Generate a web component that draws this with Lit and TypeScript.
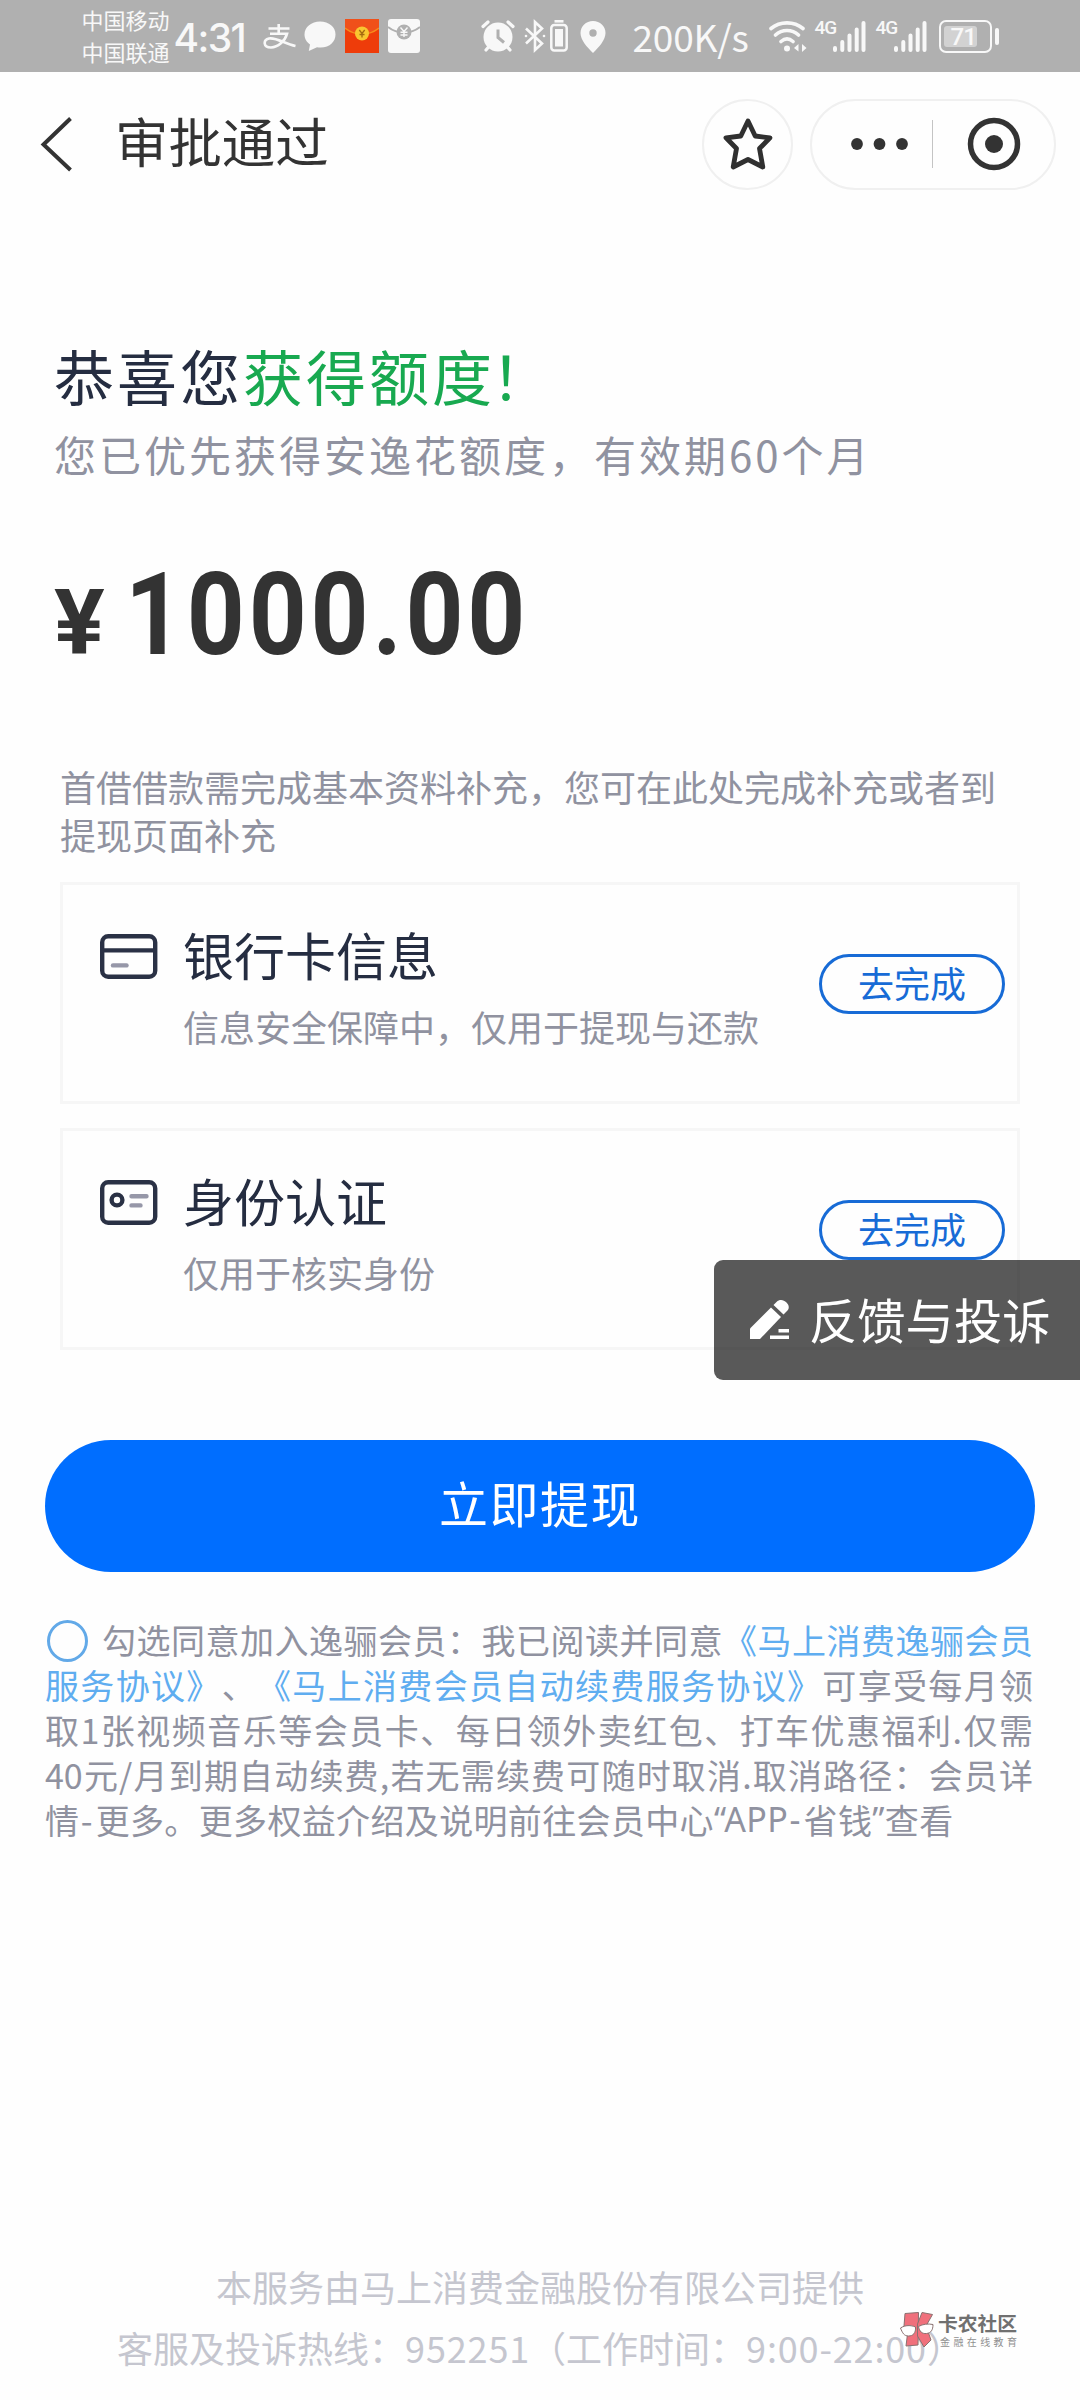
import { LitElement, html, css, svg } from "lit";
import { customElement, property } from "lit/decorators.js";

const FONT = css`"Noto Sans CJK SC", "Noto Sans", sans-serif`;

const bankCardIcon = svg`
  <rect x="2.2" y="2.2" width="53" height="40.6" rx="6" fill="none" stroke="#2a3145" stroke-width="4.4"/>
  <path d="M2 16.4H55" stroke="#2a3145" stroke-width="4.4"/>
  <path d="M13 31.4H26.5" stroke="#9697a8" stroke-width="4.4" stroke-linecap="round"/>`;

const idCardIcon = svg`
  <rect x="2.2" y="2.2" width="53" height="40.6" rx="6" fill="none" stroke="#2a3145" stroke-width="4.4"/>
  <circle cx="17" cy="20" r="5.4" fill="none" stroke="#2a3145" stroke-width="4.4"/>
  <path d="M31.5 16.2H46.5M31.5 25.4H40.5" stroke="#9697a8" stroke-width="4.4" stroke-linecap="round"/>`;

@customElement("status-bar")
class StatusBar extends LitElement {
  static styles = css`
    :host {
      display: flex;
      height: 72px;
      background: #b0b0b0;
      color: #f8f8f8;
      font-family: ${FONT};
      align-items: flex-start;
      white-space: nowrap;
    }
    svg { display: block; flex: none; }
    .carriers { margin: 3px 0 0 81.5px; width: 88px; font-size: 22px; line-height: 32px; }
    .time { margin: 15px 0 0 4px; width: 75px; font: 500 39px/46px Inter, Roboto, sans-serif; letter-spacing: -1.6px; }
    .icon { margin-top: 18px; }
    .alipay { margin-left: 14px; }
    .chat { margin-left: 8px; }
    .packet { margin-left: 8px; }
    .mail { margin-left: 8px; }
    .alarm { margin-left: 60px; }
    .bt { margin-left: 9px; }
    .device { margin-left: 4px; }
    .pin { margin-left: 12px; }
    .rate { margin: 13px 0 0 27px; width: 114px; font-size: 37px; line-height: 46px; font-weight: 400; letter-spacing: -0.2px; }
    .wifi { margin-left: 22px; }
    .net { margin: 18px 0 0 8px; font: 500 19px/20px Roboto, sans-serif; width: 18px; letter-spacing: -1px; }
    .net.second { margin-left: 10px; }
    .battery {
      margin: 20px 0 0 12px;
      box-sizing: border-box;
      width: 53px; height: 33px;
      border: 2.5px solid #f8f8f8;
      border-radius: 7px;
      padding: 4px 3px;
      display: flex;
    }
    .level {
      width: 33px;
      background: #d2d2d2;
      border-radius: 3px;
      display: flex;
      align-items: center;
      padding-left: 7px;
      box-sizing: border-box;
      font: 500 24px/20px Roboto, sans-serif;
      letter-spacing: -1px;
    }
    .nub { margin: 28px 0 0 3px; width: 4px; height: 17px; border-radius: 2px; background: #f8f8f8; }
  `;

  private bars() {
    return svg`<path d="M2 30V32M9.3 24V32M16.5 17.5V32M23.7 11.5V32M30.5 5V32" stroke="#f8f8f8" stroke-width="4" stroke-linecap="round"/>`;
  }

  render() {
    return html`
      <div class="carriers"><div>中国移动</div><div>中国联通</div></div>
      <div class="time">4:31</div>
      <svg class="icon alipay" width="33" height="36" viewBox="0 0 33 36" fill="none" stroke="#f8f8f8" stroke-width="2.6">
        <path d="M5.5 10.5H26.5M15.7 6V15.5M7 15.8H24C22 23 15 29.5 8 29.5C0 29.5 0 22 6 20.5C13 19 22 26 32.5 28"/>
      </svg>
      <svg class="icon chat" width="33" height="36" viewBox="0 0 33 36">
        <path fill="#f8f8f8" d="M16 3.5C7.500 3.500 .5 9 .5 16.500C.5 21 2.800 24 6 26.500L4.800 33L13 29.300C25 31 31.500 24 31.500 16.500C31.500 9 25 3.500 16 3.500Z"/>
      </svg>
      <svg class="icon packet" width="34" height="36" viewBox="0 0 34 36">
        <rect y="1" width="34" height="34" fill="#ee3c0a"/>
        <path d="M0 1H34V10C29 14 23 16 17 16S5 14 0 10Z" fill="#f0501a"/>
        <path d="M0 10C5 14 11 16 17 16S29 14 34 10" fill="none" stroke="#f78a1d" stroke-width="1.500"/>
        <circle cx="17" cy="15.500" r="7" fill="#f9c630"/>
        <path d="M14.300 12L17 15.500L19.700 12M17 15.500V19.500M14.500 16.500H19.500" fill="none" stroke="#a46a10" stroke-width="1.300"/>
      </svg>
      <svg class="icon mail" width="34" height="36" viewBox="0 0 34 36">
        <rect x="1" y="1" width="32" height="34" rx="3" fill="#f8f8f8"/>
        <path d="M1 9C6 13 11 14.500 17 14.500S28 13 33 9" fill="none" stroke="#b0b0b0" stroke-width="2"/>
        <circle cx="17" cy="14" r="7.500" fill="#b0b0b0"/>
        <path d="M13.500 9.500L17 13.500L20.500 9.500M17 13.500V19M13.500 14.300H20.500M13.500 17H20.500" fill="none" stroke="#f8f8f8" stroke-width="1.400"/>
      </svg>
      <svg class="icon alarm" width="34" height="36" viewBox="0 0 34 36">
        <circle cx="17" cy="19" r="14.500" fill="#f8f8f8"/>
        <path d="M2 8.500L7 4M32 8.500L27 4M5 32L8 28.500M29 32L26 28.500" stroke="#f8f8f8" stroke-width="3.200" stroke-linecap="round"/>
        <path d="M17 11.500V19.500L23 24.500" stroke="#b0b0b0" stroke-width="3" fill="none"/>
      </svg>
      <svg class="icon bt" width="22" height="36" viewBox="0 0 22 36" fill="none" stroke="#f8f8f8" stroke-width="2.600">
        <path d="M2 10.500L18 25.500L11 32V4L18 10.500L2 25.500"/>
        <circle cx="2" cy="18" r="1.300" fill="#f8f8f8" stroke="none"/>
        <circle cx="20" cy="18" r="1.300" fill="#f8f8f8" stroke="none"/>
      </svg>
      <svg class="icon device" width="18" height="36" viewBox="0 0 18 36">
        <path d="M4.500 3.300H13.500" stroke="#f8f8f8" stroke-width="2.600"/>
        <rect x="1.300" y="7" width="15.400" height="25.500" rx="3" fill="none" stroke="#f8f8f8" stroke-width="2.500"/>
        <rect x="5" y="11" width="8" height="17.500" fill="#f8f8f8"/>
      </svg>
      <svg class="icon pin" width="26" height="36" viewBox="0 0 26 36">
        <path fill="#f8f8f8" fill-rule="evenodd" d="M13 3C6 3 .5 8 .5 15C.5 22 7 29 13 35C19 29 25.500 22 25.500 15C25.500 8 20 3 13 3ZM13 11.300A3.700 3.700 0 1 1 13 18.700A3.700 3.700 0 1 1 13 11.300Z"/>
      </svg>
      <div class="rate">200K/s</div>
      <svg class="icon wifi" width="38" height="36" viewBox="0 0 38 36" fill="none" stroke="#f8f8f8" stroke-width="3.600" stroke-linecap="round">
        <path d="M2 10.500C11 3 25 3 34 10.500M6.500 17C13 11 23 11 29.500 17M12 23.500C16 20 20 20 24 23.500"/>
        <circle cx="18" cy="30.500" r="3" fill="#f8f8f8" stroke="none"/>
        <path d="M29.500 26V33.500L25 30M33 34V26L37.500 30" stroke-width="0" fill="#f8f8f8"/>
      </svg>
      <div class="net">4G</div>
      <svg class="icon" width="33" height="36" viewBox="0 0 33 36">${this.bars()}</svg>
      <div class="net second">4G</div>
      <svg class="icon" width="33" height="36" viewBox="0 0 33 36">${this.bars()}</svg>
      <div class="battery"><div class="level">71</div></div>
      <div class="nub"></div>
    `;
  }
}

@customElement("nav-bar")
class NavBar extends LitElement {
  static styles = css`
    :host {
      display: flex;
      align-items: center;
      height: 144px;
      padding: 0 24px 0 39px;
      font-family: ${FONT};
      color: #333;
    }
    svg { display: block; flex: none; }
    .title { margin-left: 40px; font-size: 53.4px; line-height: 64px; padding-bottom: 8px; flex: 1; white-space: nowrap; }
    .star, .capsule { box-sizing: border-box; height: 91px; border: 2px solid #f0f0f0; border-radius: 46px; display: flex; align-items: center; }
    .star { width: 91px; justify-content: center; margin-right: 17px; }
    .capsule { width: 246px; }
    .dots { margin-left: 38px; }
    .divider { width: 1px; height: 48px; background: #c4c4c4; margin-left: 22px; }
    .target { margin-left: 34px; }
  `;

  render() {
    return html`
      <svg width="36" height="56" viewBox="0 0 36 56" fill="none" stroke="#333" stroke-width="4"><path d="M31.500 2.500L4.500 28.500L31.500 54"/></svg>
      <div class="title">审批通过</div>
      <div class="star">
        <svg width="52" height="54" viewBox="0 0 52 54" fill="none" stroke="#303030" stroke-width="4.800" stroke-linejoin="round">
          <path d="M26 4L33.200 19L48 20.800L37.500 31.500L40.800 50L26 42.500L11.200 50L14.500 31.500L4 20.800L18.800 19Z"/>
        </svg>
      </div>
      <div class="capsule">
        <svg class="dots" width="60" height="14" viewBox="0 0 60 14" fill="#333"><circle cx="7" cy="7" r="5.900"/><circle cx="29.500" cy="7" r="5.900"/><circle cx="52" cy="7" r="5.900"/></svg>
        <div class="divider"></div>
        <svg class="target" width="54" height="54" viewBox="0 0 54 54"><circle cx="27" cy="27" r="23.500" fill="none" stroke="#333" stroke-width="5.500"/><circle cx="27" cy="27" r="9" fill="#333"/></svg>
      </div>
    `;
  }
}

@customElement("task-card")
class TaskCard extends LitElement {
  @property() heading = "";
  @property() detail = "";
  @property({ attribute: false }) icon: unknown;

  static styles = css`
    :host {
      box-sizing: border-box;
      display: flex;
      align-items: flex-start;
      height: 222px;
      border: 3px solid #f6f6f6;
      padding: 39px 12px 0 37px;
      font-family: ${FONT};
      text-spacing-trim: space-all;
      white-space: nowrap;
    }
    .icon { display: block; margin: 10px 25px 0 0; }
    .text { flex: 1; }
    .heading { font-size: 51px; line-height: 60px; color: #252d41; }
    .detail { margin-top: 18px; font-size: 36px; line-height: 48px; color: #9092a0; }
    .action {
      box-sizing: border-box;
      width: 186px; height: 60px;
      margin-top: 30px;
      border: 3px solid #176bd6;
      border-radius: 30px;
      color: #176bd6;
      font-size: 36px;
      line-height: 50px;
      text-align: center;
    }
  `;

  render() {
    return html`
      <svg class="icon" width="58" height="45" viewBox="0 0 58 45">${this.icon}</svg>
      <div class="text">
        <div class="heading">${this.heading}</div>
        <div class="detail">${this.detail}</div>
      </div>
      <div class="action">去完成</div>
    `;
  }
}

@customElement("app-root")
class AppRoot extends LitElement {
  static styles = css`
    :host {
      display: flex;
      flex-direction: column;
      position: relative;
      box-sizing: border-box;
      width: 1080px;
      height: 2400px;
      overflow: hidden;
      background: #fefefe;
      font-family: ${FONT};
      text-spacing-trim: space-all;
    }
    .hero { padding: 123px 54px 0; white-space: nowrap; }
    .congrats { font-size: 60px; line-height: 72px; letter-spacing: 3px; color: #252d41; }
    .granted { color: #18a950; }
    .bang { margin-left: -4px; }
    .validity { margin-top: 16px; font-size: 42px; line-height: 54px; letter-spacing: 3px; color: #9092a0; }
    .amount { margin-top: 84px; display: flex; align-items: baseline; height: 100px; font: 700 115px/100px Roboto, sans-serif; color: #333; }
    .yen { font-size: 91px; transform: scaleX(1.04); transform-origin: 0 50%; width: 71px; }
    .digits { transform: scaleX(0.88); transform-origin: 0 50%; letter-spacing: 4.300px; }
    .tasks { display: flex; flex-direction: column; gap: 24px; padding: 97px 60px 0; }
    .note { font-size: 36px; line-height: 48px; color: #9092a0; }
    .submit { margin: 90px 45px 0; height: 132px; border-radius: 66px; background: #006eff; color: #fff; font-size: 49px; line-height: 124px; letter-spacing: 1.500px; text-align: center; }
    .agreement { margin: 45px 47px 0 45px; font-size: 34px; line-height: 45px; color: #9092a0; }
    .line { display: flex; white-space: nowrap; }
    .line.last { letter-spacing: 0.350px; }
    .dash { letter-spacing: 3px; padding-left: 1.500px; }
    .fill { flex: 1; text-align: justify; text-align-last: justify; }
    .check { flex: none; margin: 3px 14px 0 2px; width: 41px; height: 42px; box-sizing: border-box; border: 3px solid #62a9e8; border-radius: 50%; }
    .link { color: #5fadf0; }
    .latin { font-family: "Noto Sans", sans-serif; }
    .footer { margin-top: auto; padding-bottom: 22px; text-align: center; font-size: 36px; line-height: 61px; color: #c5c6cf; white-space: nowrap; }
    .num { letter-spacing: 0.850px; }
    .feedback {
      position: absolute; right: 0; top: 1260px;
      box-sizing: border-box; width: 366px; height: 120px;
      padding-left: 35px;
      display: flex; align-items: center;
      border-radius: 9px 0 0 9px;
      background: rgba(0, 0, 0, 0.65);
      color: #fff; font-size: 48.300px; line-height: 60px; white-space: nowrap;
    }
    .feedback svg { display: block; margin-right: 20px; }
    .feedback span { padding-bottom: 4px; }
    .watermark { position: absolute; left: 899px; top: 2311px; display: flex; gap: 4px; white-space: nowrap; color: #707070; }
    .brand { font-size: 19.800px; font-weight: 700; line-height: 22px; margin-top: 1px; }
    .slogan { font-size: 10px; line-height: 13px; letter-spacing: 3.400px; margin: 1px 0 0 2px; color: #909090; }
  `;

  render() {
    return html`
      <status-bar></status-bar>
      <nav-bar></nav-bar>
      <section class="hero">
        <div class="congrats">恭喜您<span class="granted">获得额度<span class="bang">！</span></span></div>
        <div class="validity">您已优先获得安逸花额度，有效期60个月</div>
        <div class="amount"><span class="yen">¥</span><span class="digits">1000.00</span></div>
      </section>
      <section class="tasks">
        <div class="note">首借借款需完成基本资料补充，您可在此处完成补充或者到提现页面补充</div>
        <task-card heading="银行卡信息" detail="信息安全保障中，仅用于提现与还款" .icon=${bankCardIcon}></task-card>
        <task-card heading="身份认证" detail="仅用于核实身份" .icon=${idCardIcon}></task-card>
      </section>
      <div class="submit">立即提现</div>
      <section class="agreement">
        <div class="line"><span class="check"></span><div class="fill">勾选同意加入逸骊会员：我已阅读并同意<span class="link">《马上消费逸骊会员</span></div></div>
        <div class="line"><div class="fill"><span class="link">服务协议》</span>、<span class="link">《马上消费会员自动续费服务协议》</span>可享受每月领</div></div>
        <div class="line"><div class="fill">取1张视频音乐等会员卡、每日领外卖红包、打车优惠福利.仅需</div></div>
        <div class="line"><div class="fill">40元/月到期自动续费,若无需续费可随时取消.取消路径：会员详</div></div>
        <div class="line last">情<span class="dash">-</span>更多。更多权益介绍及说明前往会员中心<span class="latin">“APP<span class="dash">-</span></span>省钱<span class="latin">”</span>查看</div>
      </section>
      <footer class="footer">
        <div>本服务由马上消费金融股份有限公司提供</div>
        <div>客服及投诉热线：<span class="num">952251</span>（工作时间：<span class="num">9:00-22:00</span>）</div>
      </footer>
      <div class="feedback">
        <svg width="40" height="42" viewBox="0 0 40 42" fill="#fff">
          <path d="M1 40V29.500L22 8.500L32 18L11 40Z"/>
          <path d="M24.500 6L27.500 3C30.500 0 34.500 .5 37.500 3.500S40.500 10 37.500 12.500L34.500 15.500Z"/>
          <path d="M29.500 30H40V33.500H29.500ZM21 36.500H40V40H21Z"/>
        </svg>
        <span>反馈与投诉</span>
      </div>
      <div class="watermark">
        <svg width="35" height="38" viewBox="0 0 35 38" stroke="#8a7070" stroke-width="1" stroke-linejoin="round">
          <path d="M6 2.500L19.500 1.500L19 34L7 35L8.500 23L5 15Z" fill="#f0707c"/>
          <path d="M23 1.500L33.500 3.500L27 15L32 29L25 36L18.500 25V13Z" fill="#f0707c"/>
          <path d="M1.500 17C6 14 12 14 16.500 16C17 22 14 25 9.500 25C5 25 3.500 22 1.500 17ZM19.500 15.500C24 13 29 12.500 34 13.500C34 19 32 22 27.500 22.500C23 23 20.500 20.500 19.500 15.500Z" fill="#fff"/>
        </svg>
        <div><div class="brand">卡农社区</div><div class="slogan">金融在线教育</div></div>
      </div>
    `;
  }
}
